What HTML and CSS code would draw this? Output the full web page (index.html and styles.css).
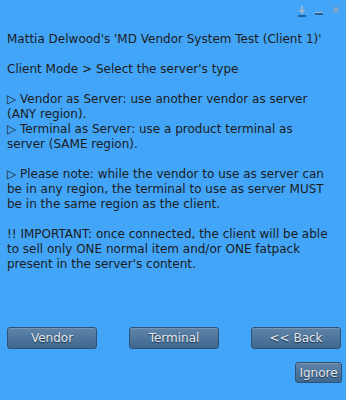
FILE: index.html
```html
<!DOCTYPE html>
<html>
<head>
<meta charset="utf-8">
<link rel="stylesheet" href="styles.css">
</head>
<body>
<div class="dialog">
  <div class="titlebar">
    <svg class="ico" width="8" height="11" viewBox="0 0 8 11">
      <rect x="3" y="0" width="2" height="4" fill="#9fb4c8"/>
      <path d="M0.5 4 H7.5 L4 8 Z" fill="#9fb4c8"/>
      <rect x="0" y="9" width="8" height="2" fill="#1f5f9a"/>
    </svg>
    <svg class="ico" width="8" height="11" viewBox="0 0 8 11">
      <rect x="0" y="6" width="8" height="3" fill="#1f5f9a"/>
      <rect x="0" y="6" width="8" height="1" fill="#9fb4c8"/>
    </svg>
    <svg class="ico" width="8" height="11" viewBox="0 0 8 11">
      <path d="M1 1 L7 7 M7 1 L1 7" stroke="#8aa6c0" stroke-width="1.6"/>
    </svg>
  </div>
  <div class="message">
    <p>Mattia Delwood's 'MD Vendor System Test (Client 1)'</p>
    <p>Client Mode &gt; Select the server's type</p>
    <p>▷ Vendor as Server: use another vendor as server (ANY region).<br>▷ Terminal as Server: use a product terminal as server (SAME region).</p>
    <p>▷ Please note: while the vendor to use as server can be in any region, the terminal to use as server MUST be in the same region as the client.</p>
    <p>!! IMPORTANT: once connected, the client will be able to sell only ONE normal item and/or ONE fatpack present in the server's content.</p>
  </div>
  <div class="actions">
    <button class="btn">Vendor</button>
    <button class="btn">Terminal</button>
    <button class="btn">&lt;&lt; Back</button>
  </div>
  <div class="footer">
    <button class="btn small">Ignore</button>
  </div>
</div>
</body>
</html>
```
FILE: styles.css
```css
html, body {
  margin: 0;
  padding: 0;
  background: #42a5f8;
}
.dialog {
  width: 346px;
  height: 400px;
  display: flex;
  flex-direction: column;
  font-family: "DejaVu Sans", sans-serif;
  font-size: 12px;
  line-height: 15px;
  color: #1c1c1c;
}
.titlebar {
  display: flex;
  justify-content: flex-end;
  align-items: flex-start;
  gap: 9px;
  padding: 6px 6px 0 0;
  height: 26px;
  box-sizing: border-box;
}
.ico { display: block; }
.message {
  padding: 6px 14px 0 7px;
  flex: 1;
}
.message p {
  margin: 0 0 15px 0;
}
.actions {
  display: flex;
  justify-content: space-between;
  padding: 0 5px 0 7px;
}
.btn {
  font-family: "DejaVu Sans", sans-serif;
  font-size: 12px;
  color: #e4e8ee;
  text-shadow: 0 1px 1px #1b2f45;
  background: linear-gradient(#5f84a8, #3f6890);
  border: 1px solid #2d5275;
  border-radius: 3px;
  width: 90px;
  height: 22px;
  padding: 0;
  box-shadow: inset 0 1px 0 rgba(255,255,255,0.15);
}
.footer {
  display: flex;
  justify-content: flex-end;
  padding: 13px 4px 17px 0;
}
.btn.small {
  width: 47px;
  height: 21px;
}
```
